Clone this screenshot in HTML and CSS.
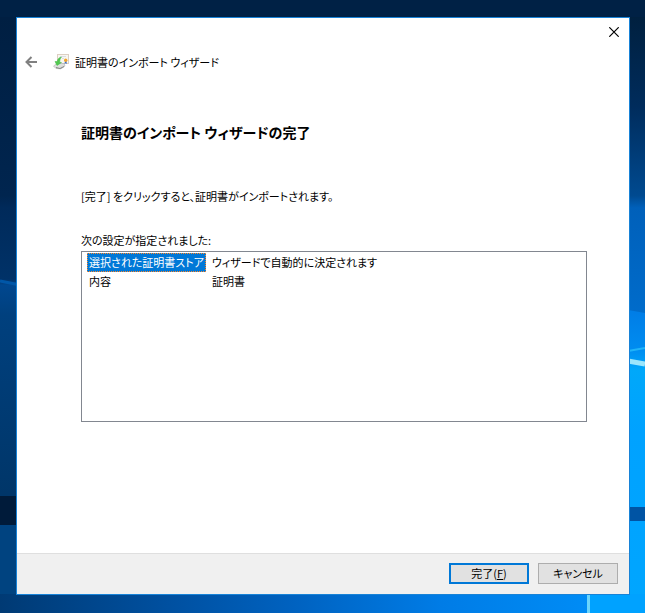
FILE: index.html
```html
<!DOCTYPE html>
<html lang="ja">
<head>
    <meta charset="utf-8">
    <title>証明書のインポート ウィザード</title>
    <link rel="stylesheet" href="styles.css">
</head>
<body>
    <svg class="wallpaper" viewBox="0 0 645 613" preserveAspectRatio="none" aria-hidden="true">
        <defs>
            <linearGradient id="leftSide" x1="0" y1="0" x2="0" y2="1">
                <stop offset="0" stop-color="#001f42"/>
                <stop offset="0.3" stop-color="#00254f"/>
                <stop offset="0.32" stop-color="#002a5a"/>
                <stop offset="0.44" stop-color="#003268"/>
                <stop offset="0.45" stop-color="#00478f"/>
                <stop offset="0.5" stop-color="#00407e"/>
                <stop offset="0.8" stop-color="#003669"/>
            </linearGradient>
            <linearGradient id="rightSide" x1="0" y1="0" x2="0" y2="1">
                <stop offset="0" stop-color="#00203f"/>
                <stop offset="0.15" stop-color="#002c5c"/>
                <stop offset="0.3" stop-color="#004a90"/>
                <stop offset="0.32" stop-color="#0060ba"/>
                <stop offset="0.5" stop-color="#006ccb"/>
            </linearGradient>
            <linearGradient id="glow" x1="0" y1="0" x2="0" y2="1">
                <stop offset="0" stop-color="#007de6"/>
                <stop offset="0.13" stop-color="#008cf0"/>
                <stop offset="0.2" stop-color="#00a8fa"/>
                <stop offset="0.4" stop-color="#00a2ff"/>
                <stop offset="1" stop-color="#00a6ff"/>
            </linearGradient>
            <linearGradient id="floor" x1="0" y1="0" x2="1" y2="0">
                <stop offset="0" stop-color="#003a74"/>
                <stop offset="0.3" stop-color="#0051a2"/>
                <stop offset="0.5" stop-color="#0062c0"/>
                <stop offset="0.75" stop-color="#007ce6"/>
                <stop offset="1" stop-color="#008cf5"/>
            </linearGradient>
        </defs>
        <rect width="645" height="613" fill="#00254c"/>
        <rect width="645" height="20" fill="#002145"/>
        <rect y="17" width="20" height="596" fill="url(#leftSide)"/>
        <rect x="625" y="17" width="20" height="596" fill="url(#rightSide)"/>
        <path d="M0 281 L20 285" stroke="#0057a8" stroke-width="3"/>
        <rect y="496" width="20" height="29" fill="#001b3a"/>
        <rect y="525" width="20" height="88" fill="#004380"/>
        <path d="M628 310 L645 313 V613 H628 Z" fill="url(#glow)"/>
        <path d="M628 351 L645 348" stroke="#20b4f8" stroke-width="2"/>
        <path d="M628 361 L645 364" stroke="#9be6fc" stroke-width="5"/>
        <rect x="628" y="507" width="17" height="14" fill="#0054a4"/>
        <rect y="594" width="588" height="19" fill="url(#floor)"/>
        <rect x="588" y="594" width="57" height="19" fill="#00a2ff"/>
        <path d="M588.500 594 V613" stroke="#6bd5fb" stroke-width="3"/>
    </svg>

    <main class="window">
        <div class="titlebar">
            <button class="close" type="button" aria-label="閉じる">
                <svg width="10" height="10" viewBox="0 0 10 10"><path d="M0.300 0.300 L9.700 9.700 M9.700 0.300 L0.300 9.700" stroke="#000" stroke-width="1.200"/></svg>
            </button>
        </div>

        <header class="header">
            <button class="back" type="button" aria-label="戻る">
                <svg width="13" height="12" viewBox="0 0 13 12" fill="none" stroke="#808080" stroke-width="2"><path d="M1.500 6 H12 M6.500 1 L1.500 6 L6.500 11"/></svg>
            </button>
            <svg class="icon" width="16" height="16" viewBox="0 0 16 16" aria-hidden="true">
                <rect x="4.500" y="0.500" width="11" height="9" fill="#f8f6f1" stroke="#dccfc2"/>
                <path d="M7 2.500 H13 M9 4.500 H11" stroke="#d9dde4"/>
                <path d="M0.500 12 L4 9.500 H11 L12 12 L8 14.800 L3 14.500 Z" fill="#dddfdd" stroke="#b4b8b4" stroke-width="0.700"/>
                <path d="M3 13.500 L7 14.500 L11 12.500" stroke="#858585" fill="none"/>
                <path d="M8.500 3 C6 3.500 4.500 5 4.300 7.500 H2 L4 11.500 L8.500 8.500 H6.800 C6.700 6.500 7 4.500 8.500 3 Z" fill="#51c94e" stroke="#45b548" stroke-width="0.500"/>
                <path d="M12 7 L11.500 10 L12.500 9.300 L13.800 10 L13.500 7 Z" fill="#3d6dc4"/>
                <circle cx="12.700" cy="6.300" r="1.700" fill="#f1a52c"/>
            </svg>
            <span>証明書のインポート ウィザード</span>
        </header>

        <section class="content">
            <h1>証明書のインポート ウィザードの完了</h1>
            <p class="message">[完了] をクリックすると、証明書がインポートされます。</p>
            <p class="label" id="settingsLabel">次の設定が指定されました:</p>
            <div class="settings">
                <table aria-labelledby="settingsLabel">
                    <tr>
                        <th class="selected" scope="row">選択された証明書ストア</th>
                        <td>ウィザードで自動的に決定されます</td>
                    </tr>
                    <tr>
                        <th scope="row">内容</th>
                        <td>証明書</td>
                    </tr>
                </table>
            </div>
        </section>

        <footer class="footer">
            <button class="btn default" type="button">完了(<u>F</u>)</button>
            <button class="btn" type="button">キャンセル</button>
        </footer>
    </main>
</body>
</html>
```

FILE: styles.css
```css
* {
    box-sizing: border-box;
}

body {
    margin: 0;
    min-height: 100vh;
    padding: 17px 15px 18px 16px;
    display: flex;
    position: relative;
    background-color: #00254c;
    color: #000;
    font-family: "Noto Sans CJK JP", sans-serif;
    font-size: 11px;
    line-height: 16px;
    font-feature-settings: "palt";
}

button {
    font: inherit;
    font-feature-settings: inherit;
    color: inherit;
    padding: 0;
}

/* Desktop behind the window */
.wallpaper {
    position: absolute;
    top: 0;
    left: 0;
    width: 100%;
    height: 100%;
}

.window {
    position: relative;
    flex: 1;
    display: flex;
    flex-direction: column;
    background-color: #fff;
    border: 1px solid #1883d7;
}

.titlebar {
    display: flex;
    justify-content: flex-end;
}

.close,
.back {
    display: flex;
    align-items: center;
    justify-content: center;
    border: none;
    background: none;
}

.close {
    width: 30px;
    height: 28px;
}

.header {
    display: flex;
    align-items: center;
    height: 32px;
    padding-left: 8px;
}

.icon {
    margin: 0 6px 0 15px;
}

.content {
    flex: 1;
    padding: 42px 42px 42px 64px;
}

h1 {
    margin: 0 0 44px;
    font-size: 14px;
    line-height: 24px;
}

.message {
    margin: 0 0 28px;
}

.label {
    margin: 0 0 3px;
}

.settings {
    min-height: 171px;
    padding: 1px 5px;
    border: 1px solid #828790;
}

table {
    border-collapse: collapse;
}

th,
td {
    height: 19px;
    padding: 0 2px 2px;
    text-align: left;
    font-weight: normal;
    white-space: nowrap;
}

td {
    padding-left: 6px;
}

.selected {
    background-color: #0078d7;
    color: #fff;
    outline: 1px dotted #ff8728;
    outline-offset: -1px;
}

.footer {
    display: flex;
    justify-content: flex-end;
    gap: 9px;
    padding: 9px 11px 10px;
    background-color: #f0f0f0;
    border-top: 1px solid #dfdfdf;
}

.btn {
    width: 80px;
    height: 21px;
    padding-bottom: 2px;
    background-color: #e1e1e1;
    border: 1px solid #adadad;
}

.btn.default {
    border: 2px solid #0078d7;
}
```
